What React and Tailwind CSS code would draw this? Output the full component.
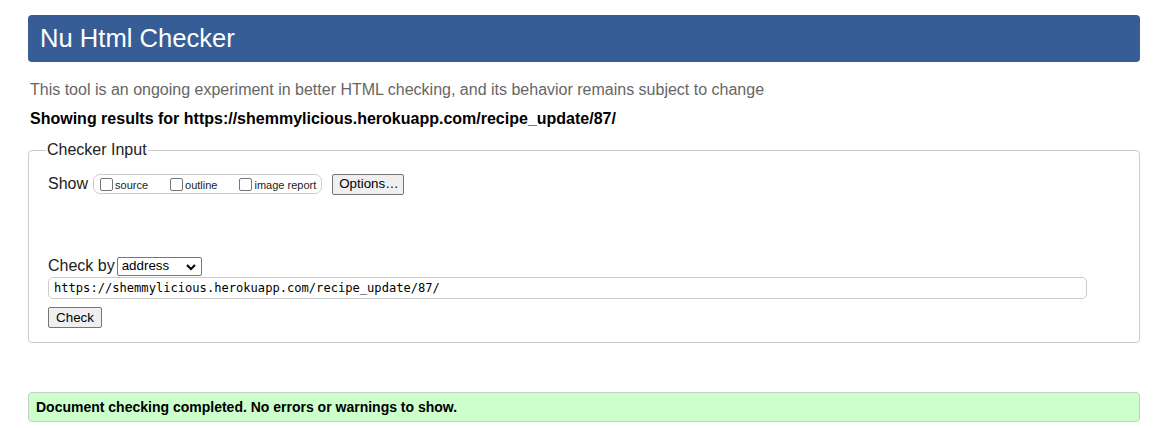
import React from 'react';

const Checkbox = ({ label }) => (
  <label className="flex items-center">
    <span className="inline-block w-[13px] h-[13px] border border-[#767676] rounded-[2px] bg-white ml-[3px] mr-[2px]" />
    <span className="text-[11px] text-[#222] leading-none mt-[3px]">{label}</span>
  </label>
);

const Button = ({ children, className = '' }) => (
  <button
    type="button"
    className={`h-[21px] px-[6px] border border-[#767676] rounded-[2px] bg-[#efefef] text-[13.33px] text-black leading-none ${className}`}
  >
    {children}
  </button>
);

export default function App() {
  const url = 'https://shemmylicious.herokuapp.com/recipe_update/87/';

  return (
    <div className="min-h-[428px] bg-white font-['Liberation_Sans',Arial,sans-serif] text-[#222]">
      <div className="ml-[28px] w-[1112px] pt-[15px]">
        {/* Header */}
        <div className="h-[47px] rounded-[4px] bg-[#365d95] px-[12px] flex items-center">
          <h1 className="text-[25.6px] text-white leading-none">Nu Html Checker</h1>
        </div>

        <p className="mt-[19px] ml-[2px] text-[16px] leading-[18px] text-[#666]">
          This tool is an ongoing experiment in better HTML checking, and its behavior remains subject to change
        </p>

        <p className="mt-[11px] ml-[2px] text-[16px] leading-[18px] font-bold text-black">
          Showing results for {url}
        </p>

        {/* Checker input */}
        <fieldset className="mt-[13px] border border-[#ccc] rounded-[4px] px-[19px] pb-[13px]">
          <legend className="ml-[-2px] px-[1px] text-[16px] leading-[18px] text-[#222]">Checker Input</legend>

          <div className="mt-[15px] flex items-center h-[20px]">
            <span className="text-[16px] text-[#222] mr-[5px]">Show</span>
            <div className="h-[20px] flex items-center gap-[19px] border border-[#ccc] rounded-[7px] pl-[3px] pr-[5px]">
              <Checkbox label="source" />
              <Checkbox label="outline" />
              <Checkbox label="image report" />
            </div>
            <Button className="ml-[10px] w-[72px]">Options…</Button>
          </div>

          <div className="mt-[62px] flex items-center h-[20px]">
            <span className="text-[16px] text-[#222] mr-[2px]">Check by</span>
            <div className="relative w-[85px] h-[19px] border border-[#767676] rounded-[2px] bg-white flex items-center pl-[4px]">
              <span className="text-[13.33px] text-black leading-none">address</span>
              <svg className="absolute right-[5px] top-[5px]" width="10" height="8" viewBox="0 0 10 8">
                <path d="M1 2 L5 6 L9 2" fill="none" stroke="#000" strokeWidth="2" />
              </svg>
            </div>
          </div>

          <div className="mt-[1px] w-[1039px] h-[22px] border border-[#ccc] rounded-[5px] flex items-center pl-[5px]">
            <span className="font-['DejaVu_Sans_Mono',monospace] text-[12.1px] text-black leading-none">{url}</span>
          </div>

          <Button className="mt-[8px] w-[54px]">Check</Button>
        </fieldset>

        {/* Result */}
        <div className="mt-[49px] h-[30px] border border-[#ccc] rounded-[4px] bg-[#ccffcc] flex items-center pl-[7px]">
          <p className="text-[14px] font-bold text-black leading-none">
            Document checking completed. No errors or warnings to show.
          </p>
        </div>
      </div>
    </div>
  );
}
